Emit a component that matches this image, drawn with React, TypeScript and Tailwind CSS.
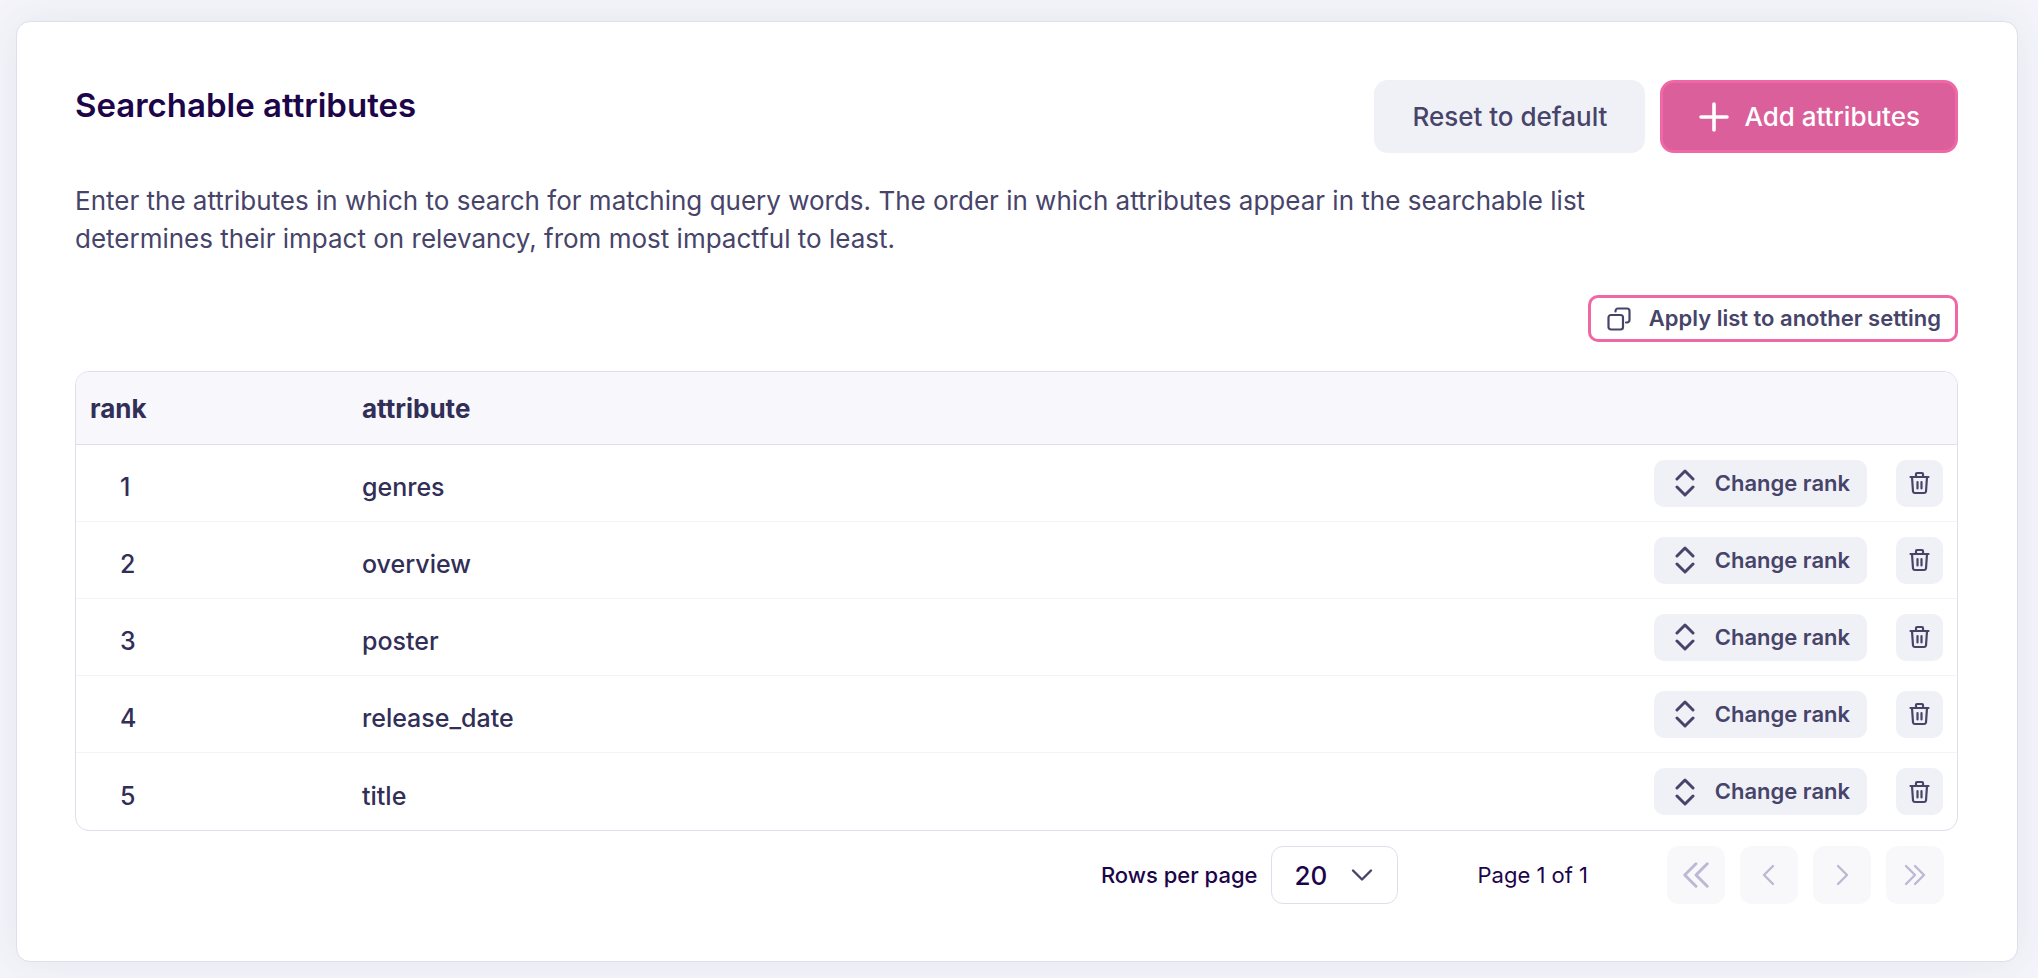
import React from 'react';

interface Attribute {
  rank: number;
  name: string;
}

const attributes: Attribute[] = [
  { rank: 1, name: 'genres' },
  { rank: 2, name: 'overview' },
  { rank: 3, name: 'poster' },
  { rank: 4, name: 'release_date' },
  { rank: 5, name: 'title' }
];

const PlusIcon = () => (
  <svg className="w-8 h-8" viewBox="0 0 32 32" fill="none" stroke="currentColor" strokeWidth="3.6" strokeLinecap="round" aria-hidden="true">
    <path d="M16 3v26M3 16h26" />
  </svg>
);

const CopyIcon = () => (
  <svg className="w-6 h-6" viewBox="0 0 24 24" fill="none" stroke="currentColor" strokeWidth="2.2" strokeLinecap="round" strokeLinejoin="round" aria-hidden="true">
    <rect x="1.5" y="8" width="14.5" height="14.5" rx="2.5" />
    <path d="M8.500 4.500V4A2.500 2.500 0 0 1 11 1.500h9A2.500 2.500 0 0 1 22.500 4v9a2.500 2.500 0 0 1-2.500 2.500h-1" />
  </svg>
);

const RankIcon = () => (
  <svg className="w-7 h-7" viewBox="0 0 28 28" fill="none" stroke="currentColor" strokeWidth="3" strokeLinecap="round" strokeLinejoin="round" aria-hidden="true">
    <path d="M6 10l8-8 8 8M6 18l8 8 8-8" />
  </svg>
);

const TrashIcon = () => (
  <svg className="w-6 h-6" viewBox="0 0 24 24" fill="none" stroke="currentColor" strokeWidth="2.2" strokeLinecap="round" strokeLinejoin="round" aria-hidden="true">
    <path d="M2.500 6h18M4 6l1 14.500a2 2 0 0 0 2 1.500h9a2 2 0 0 0 2-1.500L19 6M8 6V3a1 1 0 0 1 1-1h5a1 1 0 0 1 1 1v3M9.500 11v6.500M13.500 11v6.500" />
  </svg>
);

interface PageButtonProps {
  label: string;
  path: string;
  large?: boolean;
}

const PageButton: React.FC<PageButtonProps> = ({ label, path, large }) => (
  <button
    type="button"
    disabled
    aria-label={label}
    className="w-[58px] h-[58px] rounded-xl bg-[#f8f8fb] text-[#bdb8d4] flex items-center justify-center"
  >
    <svg className={large ? 'w-[30px] h-[30px]' : 'w-6 h-6'} viewBox="0 0 24 24" fill="none" stroke="currentColor" strokeWidth="2.4" strokeLinecap="round" strokeLinejoin="round" aria-hidden="true">
      <path d={path} />
    </svg>
  </button>
);

export default function App() {
  return (
    <div className="min-h-screen bg-[#f4f4fa] pl-4 pt-[21px] pb-3.5 pr-5 font-['Inter',sans-serif] text-[26px] text-[#312e57]">
      <main className="bg-white border border-[#dfdeeb] rounded-[14px] shadow-[0_0_40px_rgba(60,60,110,0.08)] pl-[58px] pr-[59px] pt-[58px] pb-[57px]">
        {/* Title and actions */}
        <header className="flex items-start justify-between">
          <h1 className="mt-1.5 text-[33px] leading-[38px] font-semibold text-[#1c0548]">Searchable attributes</h1>
          <div className="flex gap-[15px]">
            <button type="button" className="h-[73px] px-[38px] rounded-[14px] bg-[#f0f1f7] text-[#47446a] font-medium">
              Reset to default
            </button>
            <button
              type="button"
              className="h-[73px] px-[35px] rounded-[14px] border-3 border-[#f067a6] bg-[#da5f9b] text-white font-medium flex items-center gap-3.5"
            >
              <PlusIcon />
              Add attributes
            </button>
          </div>
        </header>

        <p className="mt-[29px] max-w-[1520px] leading-[38px] text-[#47446a]">
          Enter the attributes in which to search for matching query words. The order in which attributes appear in the searchable list determines their impact on relevancy, from most impactful to least.
        </p>

        <div className="mt-[37px] flex justify-end">
          <button
            type="button"
            className="h-[47px] pl-4 pr-3.5 rounded-[10px] border-3 border-[#f067a6] text-[#47446a] text-[22px] font-semibold flex items-center gap-[18px]"
          >
            <CopyIcon />
            Apply list to another setting
          </button>
        </div>

        {/* Attributes table */}
        <div className="mt-[29px] border border-[#dfdeeb] rounded-[14px] overflow-hidden">
          <table className="w-full border-separate border-spacing-0">
            <thead className="bg-[#f7f7fc]">
              <tr className="h-[73px] text-left">
                <th className="w-[272px] px-3.5 border-b border-[#dfdeeb]">rank</th>
                <th className="px-3.5 border-b border-[#dfdeeb]">attribute</th>
                <th className="border-b border-[#dfdeeb]" aria-label="actions"></th>
              </tr>
            </thead>
            <tbody>
              {attributes.map((attribute, index) => {
                const line = index < attributes.length - 1 ? 'border-b border-[#f4f4f8]' : '';
                return (
                  <tr key={attribute.rank} className="h-[77px] text-[25px] font-medium">
                    <td className={`pl-11 pt-2.5 ${line}`}>{attribute.rank}</td>
                    <td className={`px-3.5 pt-2.5 ${line}`}>{attribute.name}</td>
                    <td className={`pr-3.5 ${line}`}>
                      <div className="flex justify-end gap-[29px] text-[#47446a]">
                        <button
                          type="button"
                          className="h-[47px] px-[17px] rounded-[10px] bg-[#f0f1f7] text-[22px] font-semibold flex items-center gap-4"
                        >
                          <RankIcon />
                          Change rank
                        </button>
                        <button
                          type="button"
                          aria-label={`Delete ${attribute.name}`}
                          className="w-[47px] h-[47px] rounded-[10px] bg-[#f0f1f7] flex items-center justify-center"
                        >
                          <TrashIcon />
                        </button>
                      </div>
                    </td>
                  </tr>
                );
              })}
            </tbody>
          </table>
        </div>

        {/* Pagination */}
        <nav className="mt-[15px] pr-3.5 flex items-center justify-end text-[22px] text-[#1c0548]">
          <label htmlFor="rows-per-page" className="mr-3.5 font-medium">Rows per page</label>
          <div className="relative">
            <select
              id="rows-per-page"
              defaultValue="20"
              className="appearance-none w-[127px] h-[58px] pl-[22px] rounded-xl border border-[#dfdeeb] bg-white text-[26px] font-medium"
            >
              <option value="10">10</option>
              <option value="20">20</option>
              <option value="50">50</option>
            </select>
            <svg className="absolute right-6 top-[17px] w-6 h-6 text-[#47446a] pointer-events-none" viewBox="0 0 24 24" fill="none" stroke="currentColor" strokeWidth="2.4" strokeLinecap="round" strokeLinejoin="round" aria-hidden="true">
              <path d="M3 7.500l9 9 9-9" />
            </svg>
          </div>
          <span className="mx-[79px]">Page 1 of 1</span>
          <div className="flex gap-[15px]">
            <PageButton label="First page" large path="M12 3l-9 9 9 9M21 3l-9 9 9 9" />
            <PageButton label="Previous page" path="M16 3l-9 9 9 9" />
            <PageButton label="Next page" path="M8 3l9 9-9 9" />
            <PageButton label="Last page" path="M3 3l9 9-9 9M12 3l9 9-9 9" />
          </div>
        </nav>
      </main>
    </div>
  );
}
